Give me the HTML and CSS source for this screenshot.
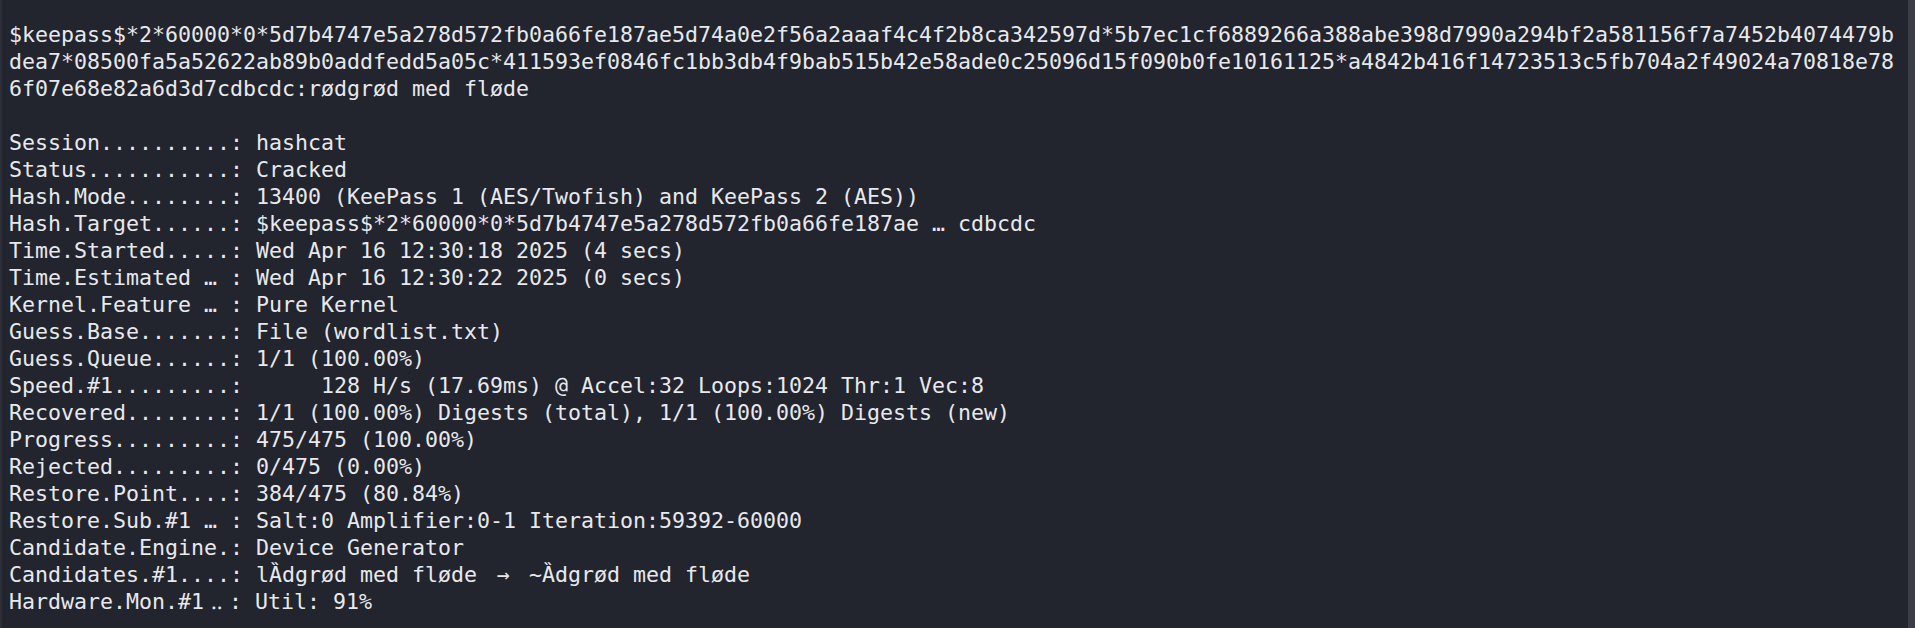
FILE: index.html
```html
<!DOCTYPE html>
<html lang="en">
<head>
<meta charset="utf-8">
<title>hashcat</title>
<link rel="stylesheet" href="styles.css">
</head>
<body>
<div class="window">
<div class="edge"></div>
<div class="term">
<div class="ln">$keepass$*2*60000*0*5d7b4747e5a278d572fb0a66fe187ae5d74a0e2f56a2aaaf4c4f2b8ca342597d*5b7ec1cf6889266a388abe398d7990a294bf2a581156f7a7452b4074479b</div>
<div class="ln">dea7*08500fa5a52622ab89b0addfedd5a05c*411593ef0846fc1bb3db4f9bab515b42e58ade0c25096d15f090b0fe10161125*a4842b416f14723513c5fb704a2f49024a70818e78</div>
<div class="ln">6f07e68e82a6d3d7cdbcdc:rødgrød med fløde</div>
<div class="ln"> </div>
<div class="ln">Session..........: hashcat</div>
<div class="ln">Status...........: Cracked</div>
<div class="ln">Hash.Mode........: 13400 (KeePass 1 (AES/Twofish) and KeePass 2 (AES))</div>
<div class="ln">Hash.Target......: $keepass$*2*60000*0*5d7b4747e5a278d572fb0a66fe187ae<span class="lig3">…</span>cdbcdc</div>
<div class="ln">Time.Started.....: Wed Apr 16 12:30:18 2025 (4 secs)</div>
<div class="ln">Time.Estimated<span class="lig3">…</span>: Wed Apr 16 12:30:22 2025 (0 secs)</div>
<div class="ln">Kernel.Feature<span class="lig3">…</span>: Pure Kernel</div>
<div class="ln">Guess.Base.......: File (wordlist.txt)</div>
<div class="ln">Guess.Queue......: 1/1 (100.00%)</div>
<div class="ln">Speed.#1.........:      128 H/s (17.69ms) @ Accel:32 Loops:1024 Thr:1 Vec:8</div>
<div class="ln">Recovered........: 1/1 (100.00%) Digests (total), 1/1 (100.00%) Digests (new)</div>
<div class="ln">Progress.........: 475/475 (100.00%)</div>
<div class="ln">Rejected.........: 0/475 (0.00%)</div>
<div class="ln">Restore.Point....: 384/475 (80.84%)</div>
<div class="ln">Restore.Sub.#1<span class="lig3">…</span>: Salt:0 Amplifier:0-1 Iteration:59392-60000</div>
<div class="ln">Candidate.Engine.: Device Generator</div>
<div class="ln">Candidates.#1....: lȀdgrød med fløde <span class="lig2">→</span> ~Ȁdgrød med fløde</div>
<div class="ln">Hardware.Mon.#1<span class="lig2">‥</span>: Util: 91%</div>
</div>
<div class="scrollbar"></div>
</div>
</body>
</html>
```

FILE: styles.css
```css
html, body {
  margin: 0;
  padding: 0;
  background: #22242e;
}

.window {
  display: flex;
  width: 1915px;
  height: 628px;
  background: #22242e;
  overflow: hidden;
}

.edge {
  width: 2px;
  flex: none;
  background: #2c2e38;
}

.term {
  flex: 1;
  padding: 21px 0 0 7px;
  font-family: "DejaVu Sans Mono", "Liberation Mono", monospace;
  font-size: 21.6px;
  line-height: 27px;
  color: #e8e9ec;
}

.ln {
  height: 27px;
  white-space: pre;
}

.lig3 {
  padding: 0 1ch;
}

.lig2 {
  padding: 0 0.5ch;
}

.scrollbar {
  width: 7px;
  flex: none;
  background: #3a3c46;
}
```
